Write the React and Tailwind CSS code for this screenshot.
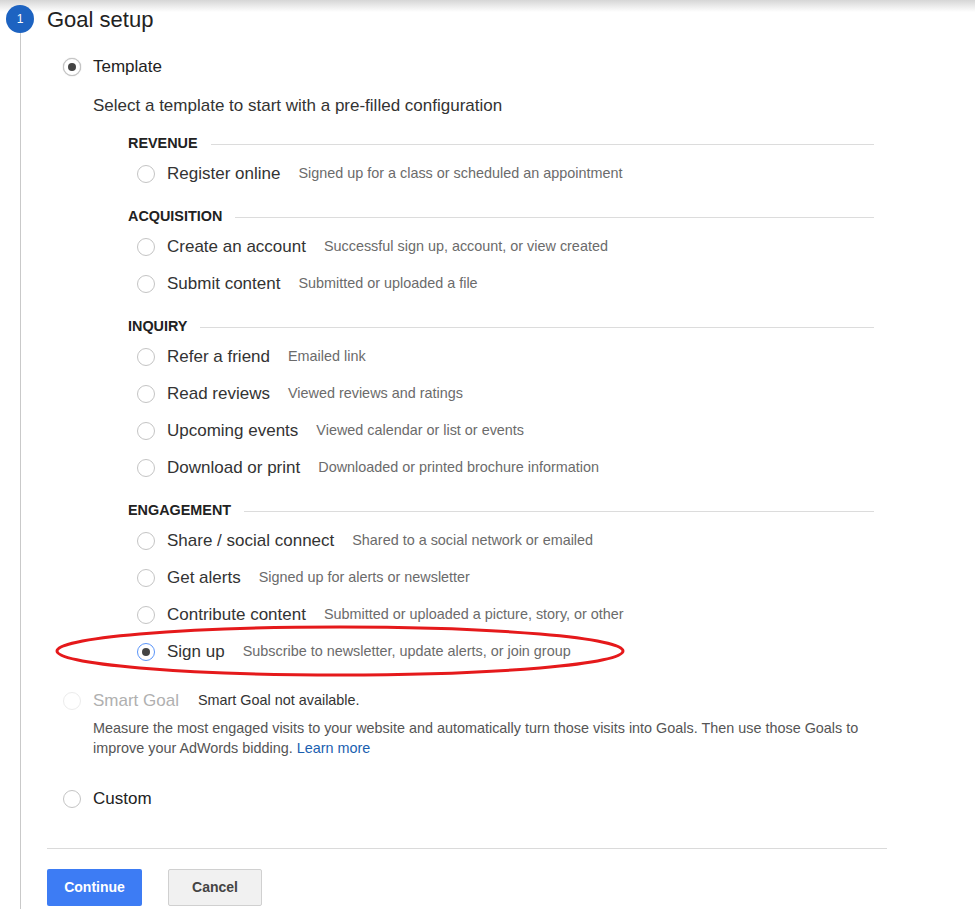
import React from 'react';

const sections = [
  {
    title: 'REVENUE',
    items: [['Register online', 'Signed up for a class or scheduled an appointment']],
  },
  {
    title: 'ACQUISITION',
    items: [
      ['Create an account', 'Successful sign up, account, or view created'],
      ['Submit content', 'Submitted or uploaded a file'],
    ],
  },
  {
    title: 'INQUIRY',
    items: [
      ['Refer a friend', 'Emailed link'],
      ['Read reviews', 'Viewed reviews and ratings'],
      ['Upcoming events', 'Viewed calendar or list or events'],
      ['Download or print', 'Downloaded or printed brochure information'],
    ],
  },
  {
    title: 'ENGAGEMENT',
    items: [
      ['Share / social connect', 'Shared to a social network or emailed'],
      ['Get alerts', 'Signed up for alerts or newsletter'],
      ['Contribute content', 'Submitted or uploaded a picture, story, or other'],
      ['Sign up', 'Subscribe to newsletter, update alerts, or join group', true],
    ],
  },
];

function Radio({ checked, focus, disabled }) {
  let border = 'border-[#c4c4c4]';
  if (focus) border = 'border-[#5b95f9]';
  if (disabled) border = 'border-[#ececec]';
  return (
    <span
      className={`flex h-[18px] w-[18px] shrink-0 items-center justify-center rounded-full border bg-white ${border} ${checked && !focus ? 'shadow-[0_0_1px_#999]' : ''}`}
    >
      {checked && <span className="h-[8px] w-[8px] rounded-full bg-[#444]" />}
    </span>
  );
}

export default function App() {
  return (
    <div
      className="relative h-[909px] w-[975px] overflow-hidden bg-white text-[#333]"
      style={{ fontFamily: '"Liberation Sans", Arial, sans-serif' }}
    >
      {/* top shadow */}
      <div className="absolute inset-x-0 top-0 h-[12px] bg-gradient-to-b from-[#d6d6d6] to-white/0" />

      <div className="flex h-full">
        {/* step rail */}
        <div className="flex w-[47px] shrink-0 flex-col">
          <div className="relative z-10 ml-[6px] mt-[5px] flex h-[28px] w-[28px] items-center justify-center rounded-full bg-[#1d63c1] text-[12px] text-white">
            1
          </div>
          <div className="ml-[20px] w-px flex-1 bg-[#c9c9c9]" />
        </div>

        {/* content */}
        <div className="w-[840px] pt-[6px]">
          <h2 className="h-[28px] text-[22px] leading-[28px] text-[#222]">Goal setup</h2>

          {/* Template */}
          <div className="mt-[21px] flex h-[24px] items-center gap-[12px] pl-[16px]">
            <Radio checked />
            <span className="text-[17px] text-[#222]">Template</span>
          </div>

          <div className="pl-[46px]">
            <p className="mt-[15px] h-[24px] text-[17px] leading-[24px]">
              Select a template to start with a pre-filled configuration
            </p>

            <div className="ml-[35px] w-[746px] pt-[15px]">
              {sections.map((s, i) => (
                <div key={s.title} className={i > 0 ? 'mt-[14px]' : ''}>
                  <div className="flex h-[22px] items-center">
                    <span className="text-[14.4px] font-bold text-[#222]">{s.title}</span>
                    <span className="ml-[13px] h-px flex-1 bg-[#dcdcdc]" />
                  </div>
                  {s.items.map(([label, desc, sel]) => (
                    <div key={label} className="flex h-[37px] items-center pl-[9px]">
                      <Radio checked={sel} focus={sel} />
                      <span className="ml-[12px] text-[17px]">{label}</span>
                      <span className="ml-[18px] text-[14.4px] text-[#6b6b6b]">{desc}</span>
                    </div>
                  ))}
                </div>
              ))}
            </div>
          </div>

          {/* Smart Goal */}
          <div className="mt-[19px] flex h-[24px] items-center pl-[16px]">
            <Radio disabled />
            <span className="ml-[12px] text-[17px] text-[#b0b0b0]">Smart Goal</span>
            <span className="ml-[19px] text-[14.4px] text-[#333]">Smart Goal not available.</span>
          </div>
          <p className="ml-[46px] mt-[5px] w-[794px] text-[14.4px] leading-[20px] text-[#555]">
            Measure the most engaged visits to your website and automatically turn those visits into Goals. Then use those Goals to improve your AdWords bidding.{' '}
            <span className="text-[#1a5fb0]">Learn more</span>
          </p>

          {/* Custom */}
          <div className="mt-[29px] flex h-[24px] items-center pl-[16px]">
            <Radio />
            <span className="ml-[12px] text-[17px] text-[#222]">Custom</span>
          </div>

          <div className="mt-[37px] h-px bg-[#dadada]" />

          <div className="mt-[20px] flex gap-[26px]">
            <button className="h-[37px] w-[95px] rounded-[2px] bg-[#3d7cf4] text-[14px] font-bold text-white">
              Continue
            </button>
            <button className="h-[37px] w-[94px] rounded-[2px] border border-[#d0d0d0] bg-[#f1f1f1] text-[14px] font-bold text-[#444]">
              Cancel
            </button>
          </div>
        </div>
      </div>

      {/* red annotation around "Sign up" */}
      <svg className="pointer-events-none absolute left-0 top-0" width="975" height="909">
        <ellipse cx="340" cy="651" rx="283" ry="24" fill="none" stroke="#e5191b" strokeWidth="3" />
      </svg>
    </div>
  );
}
